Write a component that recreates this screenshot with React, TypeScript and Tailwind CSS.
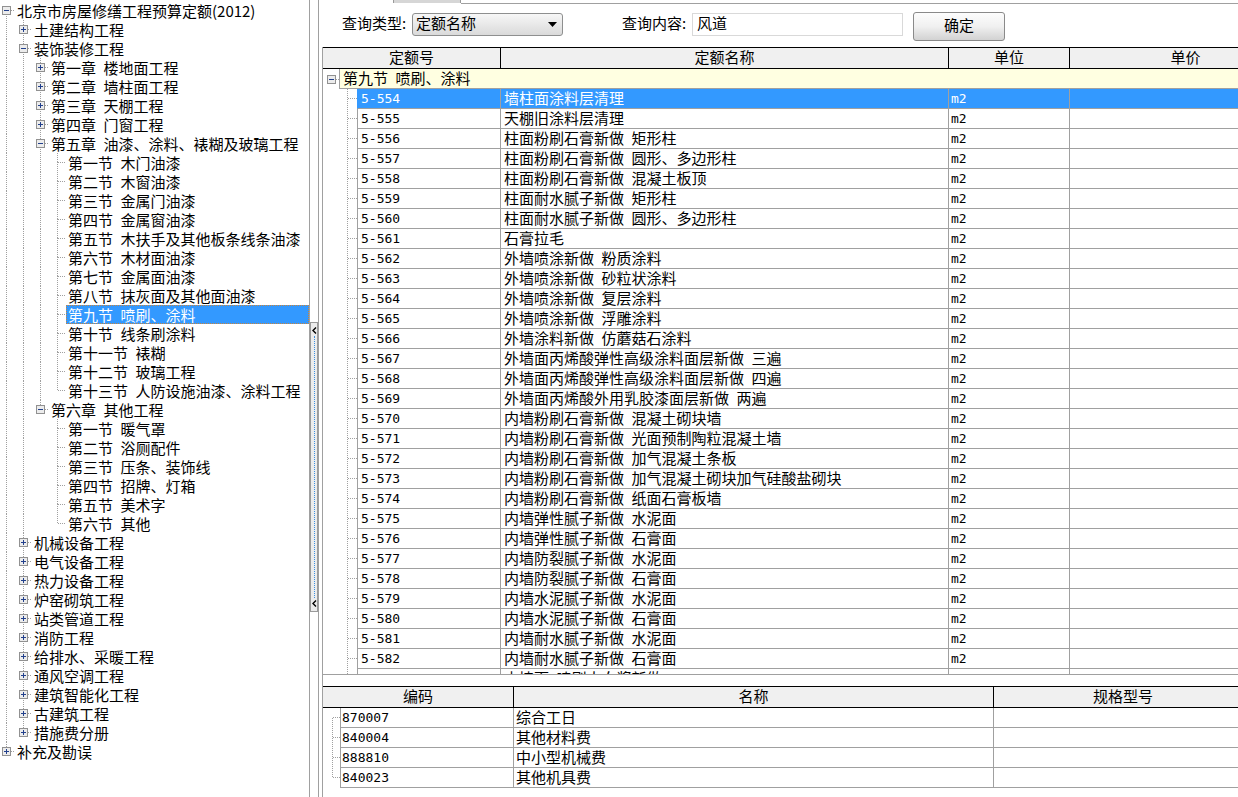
import React from "react";

type TNode = { label: string; open?: boolean; children?: TNode[] };
type Row = {
  label: string;
  level: number;
  trail: boolean[];
  last: boolean;
  top: boolean;
  kind: "plus" | "minus" | "leaf";
};

const S = "\u2002";

const leaf = (xs: string[]): TNode[] => xs.map((label) => ({ label }));
const shut = (xs: string[]): TNode[] => xs.map((label) => ({ label, children: [] }));

const tree: TNode[] = [
  {
    label: "北京市房屋修缮工程预算定额(2012)",
    open: true,
    children: [
      { label: "土建结构工程", children: [] },
      {
        label: "装饰装修工程",
        open: true,
        children: [
          ...shut([
            `第一章${S}楼地面工程`,
            `第二章${S}墙柱面工程`,
            `第三章${S}天棚工程`,
            `第四章${S}门窗工程`,
          ]),
          {
            label: `第五章${S}油漆、涂料、裱糊及玻璃工程`,
            open: true,
            children: leaf([
              `第一节${S}木门油漆`,
              `第二节${S}木窗油漆`,
              `第三节${S}金属门油漆`,
              `第四节${S}金属窗油漆`,
              `第五节${S}木扶手及其他板条线条油漆`,
              `第六节${S}木材面油漆`,
              `第七节${S}金属面油漆`,
              `第八节${S}抹灰面及其他面油漆`,
              `第九节${S}喷刷、涂料`,
              `第十节${S}线条刷涂料`,
              `第十一节${S}裱糊`,
              `第十二节${S}玻璃工程`,
              `第十三节${S}人防设施油漆、涂料工程`,
            ]),
          },
          {
            label: `第六章${S}其他工程`,
            open: true,
            children: leaf([
              `第一节${S}暖气罩`,
              `第二节${S}浴厕配件`,
              `第三节${S}压条、装饰线`,
              `第四节${S}招牌、灯箱`,
              `第五节${S}美术字`,
              `第六节${S}其他`,
            ]),
          },
        ],
      },
      ...shut([
        "机械设备工程",
        "电气设备工程",
        "热力设备工程",
        "炉窑砌筑工程",
        "站类管道工程",
        "消防工程",
        "给排水、采暖工程",
        "通风空调工程",
        "建筑智能化工程",
        "古建筑工程",
        "措施费分册",
      ]),
    ],
  },
  { label: "补充及勘误", children: [] },
];

function flatten(nodes: TNode[], level: number, trail: boolean[], out: Row[]) {
  nodes.forEach((n, i) => {
    const last = i === nodes.length - 1;
    const kind = n.children ? (n.open ? "minus" : "plus") : "leaf";
    out.push({ label: n.label, level, trail, last, top: !(level === 0 && i === 0), kind });
    if (n.open && n.children) flatten(n.children, level + 1, [...trail, !last], out);
  });
  return out;
}

const quotas: [string, string][] = [
  ["5-554", "墙柱面涂料层清理"],
  ["5-555", "天棚旧涂料层清理"],
  ["5-556", `柱面粉刷石膏新做${S}矩形柱`],
  ["5-557", `柱面粉刷石膏新做${S}圆形、多边形柱`],
  ["5-558", `柱面粉刷石膏新做${S}混凝土板顶`],
  ["5-559", `柱面耐水腻子新做${S}矩形柱`],
  ["5-560", `柱面耐水腻子新做${S}圆形、多边形柱`],
  ["5-561", "石膏拉毛"],
  ["5-562", `外墙喷涂新做${S}粉质涂料`],
  ["5-563", `外墙喷涂新做${S}砂粒状涂料`],
  ["5-564", `外墙喷涂新做${S}复层涂料`],
  ["5-565", `外墙喷涂新做${S}浮雕涂料`],
  ["5-566", `外墙涂料新做${S}仿蘑菇石涂料`],
  ["5-567", `外墙面丙烯酸弹性高级涂料面层新做${S}三遍`],
  ["5-568", `外墙面丙烯酸弹性高级涂料面层新做${S}四遍`],
  ["5-569", `外墙面丙烯酸外用乳胶漆面层新做${S}两遍`],
  ["5-570", `内墙粉刷石膏新做${S}混凝土砌块墙`],
  ["5-571", `内墙粉刷石膏新做${S}光面预制陶粒混凝土墙`],
  ["5-572", `内墙粉刷石膏新做${S}加气混凝土条板`],
  ["5-573", `内墙粉刷石膏新做${S}加气混凝土砌块加气硅酸盐砌块`],
  ["5-574", `内墙粉刷石膏新做${S}纸面石膏板墙`],
  ["5-575", `内墙弹性腻子新做${S}水泥面`],
  ["5-576", `内墙弹性腻子新做${S}石膏面`],
  ["5-577", `内墙防裂腻子新做${S}水泥面`],
  ["5-578", `内墙防裂腻子新做${S}石膏面`],
  ["5-579", `内墙水泥腻子新做${S}水泥面`],
  ["5-580", `内墙水泥腻子新做${S}石膏面`],
  ["5-581", `内墙耐水腻子新做${S}水泥面`],
  ["5-582", `内墙耐水腻子新做${S}石膏面`],
  ["5-583", `内墙面${S}喷刷大白浆新做`],
];

const materials: [string, string][] = [
  ["870007", "综合工日"],
  ["840004", "其他材料费"],
  ["888810", "中小型机械费"],
  ["840023", "其他机具费"],
];

const DOT = "#a0a0a0";

function Box({ x, y, open }: { x: number; y: number; open: boolean }) {
  return (
    <g>
      <rect x={x + 0.5} y={y + 0.5} width="8" height="8" fill="#ececec" stroke="#919191" />
      <line x1={x + 2} y1={y + 4.5} x2={x + 7} y2={y + 4.5} stroke="#22408c" />
      {!open && <line x1={x + 4.5} y1={y + 2} x2={x + 4.5} y2={y + 7} stroke="#22408c" />}
    </g>
  );
}

function Guide({ on }: { on: boolean }) {
  return (
    <svg width="17" height="19" className="shrink-0" shapeRendering="crispEdges">
      {on && <line x1="6.5" y1="0" x2="6.5" y2="19" stroke={DOT} strokeDasharray="1 1" />}
    </svg>
  );
}

function Own({ row }: { row: Row }) {
  return (
    <svg width="15" height="19" className="shrink-0" shapeRendering="crispEdges">
      {row.top && <line x1="6.5" y1="0" x2="6.5" y2="9" stroke={DOT} strokeDasharray="1 1" />}
      {!row.last && <line x1="6.5" y1="9" x2="6.5" y2="19" stroke={DOT} strokeDasharray="1 1" />}
      <line x1="7" y1="9.5" x2="15" y2="9.5" stroke={DOT} strokeDasharray="1 1" />
      {row.kind !== "leaf" && <Box x={2} y={5} open={row.kind === "minus"} />}
    </svg>
  );
}

function Chevron() {
  return (
    <svg width="5" height="7" className="shrink-0">
      <path d="M4 0.5L1 3.5L4 6.5" fill="none" stroke="#000" strokeWidth="1.4" />
    </svg>
  );
}

export default function App() {
  const rows = flatten(tree, 0, [], []);

  return (
    <div className="flex h-[797px] w-[1238px] overflow-hidden bg-white font-['Noto_Sans_CJK_SC',sans-serif] text-[15px] text-black">
      <div className="w-[310px] shrink-0 overflow-hidden border-r border-[#a0a0a0] pt-[1px]">
        {rows.map((r, i) => (
          <div key={i} className="flex h-[19px] items-center">
            {r.trail.map((on, j) => (
              <Guide key={j} on={on} />
            ))}
            <Own row={r} />
            <div
              className={`flex h-[19px] flex-1 items-center whitespace-nowrap pl-[2px] pb-[1px] leading-[17px] ${
                i === 16
                  ? "bg-[#3399ff] text-white outline-1 -outline-offset-1 outline-dotted outline-[#c8843c]"
                  : ""
              }`}
            >
              {r.label}
            </div>
          </div>
        ))}
      </div>

      <div className="w-[9px] shrink-0 border-r border-[#a0a0a0]">
        <div className="mt-[322px] flex h-[290px] w-[8px] flex-col items-center border border-[#9a9a9a] bg-[#ececec] py-[4px]">
          <Chevron />
          <div className="my-[2px] flex-1 border-l border-dotted border-[#3c8fe0]" />
          <Chevron />
        </div>
      </div>

      <div className="flex min-w-0 flex-1 flex-col overflow-hidden">
        <div className="flex h-[4px] shrink-0 items-start">
          <div className="w-[74px]" />
          <div className="h-[3px] w-[68px] border-x border-[#9a9a9a] bg-[#d6d6d6]" />
          <div className="h-[4px] flex-1 border-b border-[#a0a0a0]" />
        </div>

        <div className="flex h-[43px] shrink-0 items-start pl-[23px] whitespace-nowrap">
          <div className="mt-[9px] flex h-[23px] w-[70px] items-center pb-[2px]">查询类型:</div>
          <div className="mt-[9px] flex h-[23px] w-[151px] items-center justify-between rounded-[3px] border border-[#8e8f8f] bg-linear-to-b from-[#f7f7f7] to-[#dadada] pl-[3px] pr-[5px]">
            <span className="pb-[2px]">定额名称</span>
            <svg width="9" height="5">
              <path d="M0 0H9L4.5 5Z" fill="#000" />
            </svg>
          </div>
          <div className="ml-[59px] mt-[9px] flex h-[23px] w-[70px] items-center pb-[2px]">查询内容:</div>
          <div className="mt-[9px] flex h-[23px] w-[211px] items-center border border-[#d9d9d9] pb-[2px] pl-[4px]">
            风道
          </div>
          <div className="ml-[10px] mt-[8px] flex h-[29px] w-[92px] items-center justify-center rounded-[3px] border border-[#8a8a8a] bg-linear-to-b from-[#fdfdfd] via-[#f0f0f0] to-[#d2d2d2] pb-[2px]">
            确定
          </div>
        </div>

        <div className="ml-[3px] flex min-h-0 flex-1 flex-col border-l border-[#a0a0a0]">
          <div className="h-[628px] shrink-0 overflow-hidden border-t border-b border-t-black border-b-[#a0a0a0]">
            <div className="flex h-[21px] border-b border-black bg-[#f0f0f0] leading-[18px]">
              <div className="w-[177px] shrink-0 text-center">定额号</div>
              <div className="w-[448px] shrink-0 border-l border-black text-center">定额名称</div>
              <div className="w-[121px] shrink-0 border-l border-black text-center">单位</div>
              <div className="w-[232px] shrink-0 border-l border-black text-center">单价</div>
            </div>

            <div className="flex h-[20px]">
              <svg width="16" height="20" className="shrink-0" shapeRendering="crispEdges">
                <line x1="13" y1="10.5" x2="16" y2="10.5" stroke={DOT} strokeDasharray="1 1" />
                <Box x={4} y={6} open />
              </svg>
              <div className="flex-1 whitespace-nowrap border-b border-l border-[#a0a0a0] bg-[#ffffe1] pl-[3px] leading-[17px]">
                第九节{S}喷刷、涂料
              </div>
            </div>

            {quotas.map(([code, name], i) => {
              const sel = i === 0;
              return (
                <div key={code} className="flex h-[20px] whitespace-nowrap">
                  <svg width="34" height="20" className="shrink-0" shapeRendering="crispEdges">
                    <line x1="24.5" y1="0" x2="24.5" y2="20" stroke={DOT} strokeDasharray="1 1" />
                    <line x1="25" y1="9.5" x2="34" y2="9.5" stroke={DOT} strokeDasharray="1 1" />
                  </svg>
                  <div
                    className={`w-[143px] shrink-0 border-b border-l border-[#a0a0a0] pl-[3px] font-['DejaVu_Sans_Mono',monospace] text-[13px] leading-[19px] ${
                      sel ? "border-l-[#3399ff] bg-[#3399ff] text-white" : ""
                    }`}
                  >
                    {code}
                  </div>
                  <div
                    className={`w-[448px] shrink-0 border-b border-l border-[#a0a0a0] pl-[3px] leading-[17px] ${
                      sel ? "bg-[#3399ff] text-white" : ""
                    }`}
                  >
                    {name}
                  </div>
                  <div
                    className={`w-[121px] shrink-0 border-b border-l border-[#a0a0a0] pl-[2px] font-['DejaVu_Sans_Mono',monospace] text-[13px] leading-[19px] ${
                      sel ? "bg-[#3399ff] text-white" : ""
                    }`}
                  >
                    m2
                  </div>
                  <div
                    className={`w-[232px] shrink-0 border-b border-l border-[#a0a0a0] ${
                      sel ? "bg-[#3399ff]" : ""
                    }`}
                  />
                </div>
              );
            })}
          </div>

          <div className="mt-[11px] flex-1 overflow-hidden border-t border-black">
            <div className="flex h-[21px] border-b border-black bg-[#f0f0f0] leading-[18px]">
              <div className="w-[190px] shrink-0 text-center">编码</div>
              <div className="w-[480px] shrink-0 border-l border-black text-center">名称</div>
              <div className="w-[259px] shrink-0 border-l border-black text-center">规格型号</div>
            </div>
            {materials.map(([code, name], i) => (
              <div key={code} className="flex h-[20px] whitespace-nowrap">
                <svg width="17" height="20" className="shrink-0" shapeRendering="crispEdges">
                  <line
                    x1="9.5"
                    y1={i === 0 ? 9.5 : 0}
                    x2="9.5"
                    y2={i === materials.length - 1 ? 10 : 20}
                    stroke={DOT}
                    strokeDasharray="1 1"
                  />
                  <line x1="10" y1="9.5" x2="17" y2="9.5" stroke={DOT} strokeDasharray="1 1" />
                </svg>
                <div className="w-[173px] shrink-0 border-b border-l border-[#a0a0a0] pl-[1px] font-['DejaVu_Sans_Mono',monospace] text-[13px] leading-[19px]">
                  {code}
                </div>
                <div className="w-[480px] shrink-0 border-b border-l border-[#a0a0a0] pl-[2px] leading-[17px]">
                  {name}
                </div>
                <div className="w-[259px] shrink-0 border-b border-l border-[#a0a0a0]" />
              </div>
            ))}
          </div>
        </div>
      </div>
    </div>
  );
}
